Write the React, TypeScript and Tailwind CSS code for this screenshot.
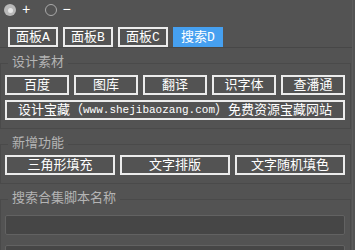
import React from 'react';

const font = { fontFamily: '"Liberation Mono", "Noto Sans CJK SC", monospace' };

const tabs = ['面板A', '面板B', '面板C', '搜索D'];
const links = ['百度', '图库', '翻译', '识字体', '查潘通'];
const tools = ['三角形填充', '文字排版', '文字随机填色'];

function Btn({ children }: { children: React.ReactNode }) {
  return (
    <button className="h-5 flex items-center justify-center border-2 border-[#ececec] text-[13px] leading-none text-white">
      {children}
    </button>
  );
}

function Group({ title, children, className }: { title: string; children: React.ReactNode; className?: string }) {
  return (
    <fieldset className={`w-[351px] border border-[#4a4a4a] pl-1 pr-[5px] pb-2 ${className ?? ''}`}>
      <legend className="ml-[3px] px-1 text-[13px] leading-4 text-[#b4b4b4]">{title}</legend>
      {children}
    </fieldset>
  );
}

export default function App() {
  return (
    <div className="w-[355px] h-[250px] overflow-hidden bg-[#535353]" style={font}>
      <div className="w-[353px] h-full border-r border-[#5c5c5c]">
        {/* mode */}
        <div className="h-5 flex items-center pl-1 text-white text-[14px]">
          <span className="w-3 h-3 rounded-full bg-[#b9b9b9] flex items-center justify-center">
            <span className="w-[5px] h-[5px] rounded-full bg-[#e6e6e6]" />
          </span>
          <span className="ml-[6px] leading-none">+</span>
          <span className="ml-[15px] w-3 h-3 rounded-full border-[1.5px] border-[#a9a9a9]" />
          <span className="ml-[5px] leading-none">−</span>
        </div>

        {/* tabs */}
        <div className="mt-[7px] h-[21px] border-b border-[#474747] flex gap-[5px] pl-2">
          {tabs.map((t, i) =>
            i === 3 ? (
              <div key={t} className="w-[50px] h-5 bg-[#46a0f0] flex items-center justify-center text-[13px] leading-none text-white">
                {t}
              </div>
            ) : (
              <div key={t} className="w-[50px] h-5 border-2 border-[#ececec] flex items-center justify-center text-[13px] leading-none text-white">
                {t}
              </div>
            )
          )}
        </div>

        <Group title="设计素材" className="mt-[7px]">
          <div className="pt-1 flex flex-col gap-[5px]">
            <div className="grid grid-cols-5 gap-[5px] w-[340px]">
              {links.map((l) => (
                <Btn key={l}>{l}</Btn>
              ))}
            </div>
            <div className="w-[340px]">
              <button className="w-full h-5 flex items-center justify-center border-2 border-[#ececec] text-[13px] leading-none text-white whitespace-nowrap">
                设计宝藏（<span className="text-[11px]">www.shejibaozang.com</span>）免费资源宝藏网站
              </button>
            </div>
          </div>
        </Group>

        <Group title="新增功能" className="mt-[7px]">
          <div className="pt-[3px] grid grid-cols-3 gap-[5px] w-[340px]">
            {tools.map((t) => (
              <Btn key={t}>{t}</Btn>
            ))}
          </div>
        </Group>

        <Group title="搜索合集脚本名称" className="mt-[7px]">
          <div className="pt-2 flex flex-col gap-[10px]">
            <div className="w-[340px] h-5 rounded-[2px] border border-[#626262] bg-[#464646]" />
            <div className="w-[340px] h-5 rounded-[2px] border border-[#626262] bg-[#464646]" />
          </div>
        </Group>
      </div>
    </div>
  );
}
